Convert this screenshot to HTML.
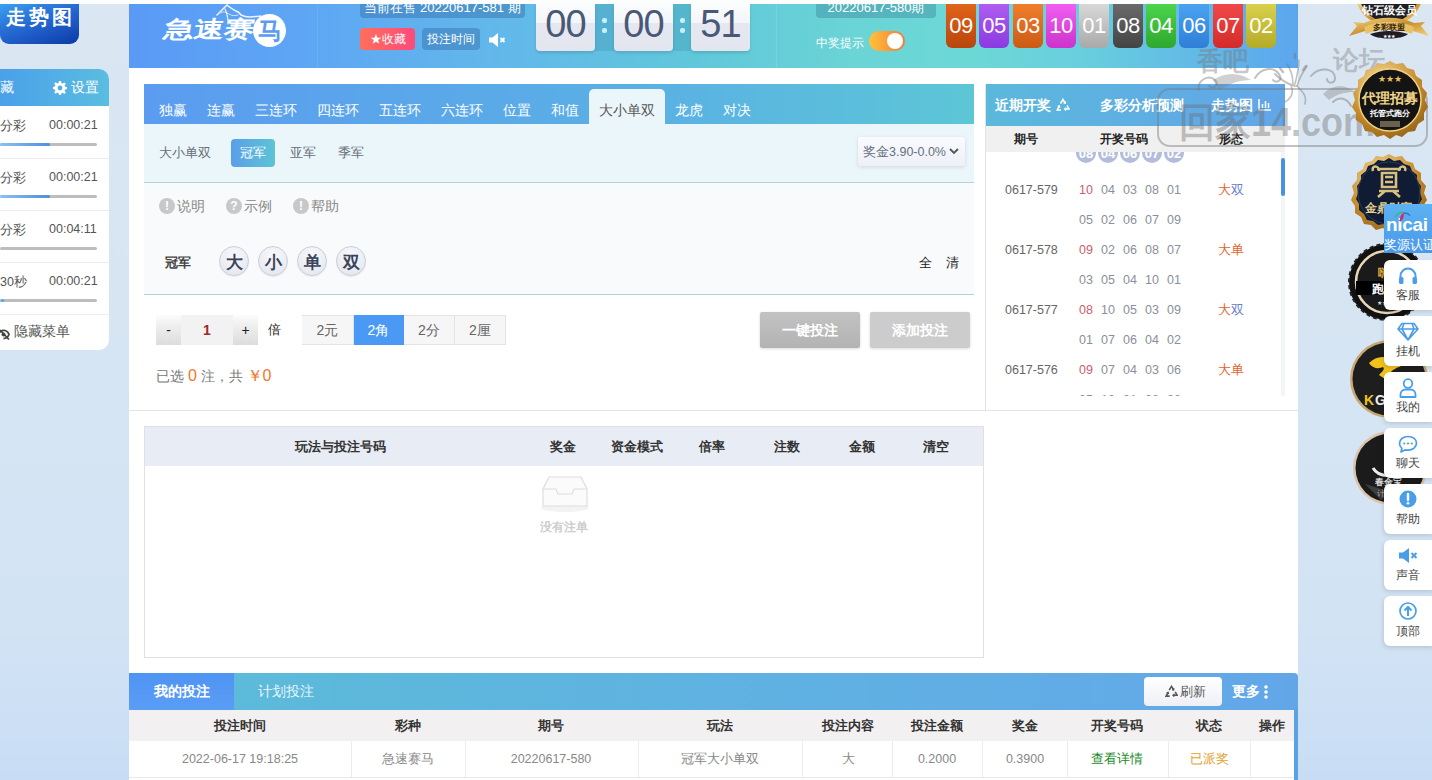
<!DOCTYPE html>
<html><head><meta charset="utf-8">
<style>
*{margin:0;padding:0;box-sizing:border-box;white-space:nowrap}
html,body{width:1432px;height:780px;overflow:hidden}
body{font-family:"Liberation Sans",sans-serif;background:linear-gradient(180deg,#dae6f2 0%,#d6e5f3 50%,#d2e3f4 80%,#c8ddf5 100%);position:relative;color:#333;font-size:13px}
.a{position:absolute}
.c{text-align:center}
/* top strip */
#topstrip{left:0;top:0;width:1432px;height:4px;background:#fcfdfd;z-index:50}
/* left */
#trend{left:0;top:4px;width:79px;height:40px;border-radius:0 0 9px 9px;background:linear-gradient(160deg,#3aa2f2 0%,#2a74d8 35%,#1f5cc8 60%,#0b3aa6 100%);color:#fff;font-size:20px;font-weight:bold;letter-spacing:3px;line-height:26px;padding-left:6px}
#lp{left:0;top:69px;width:109px;height:281px;background:#fff;border-radius:0 10px 10px 0;overflow:hidden}
#lph{left:0;top:0;width:109px;height:37px;background:linear-gradient(90deg,#4aa0ea,#5bbde0);color:#fff;font-size:13px;line-height:37px}
.lrow{left:0;width:109px;height:52px;border-bottom:1px solid #ececec}
.lrow .n{left:0;top:11px;font-size:12.5px;color:#555}
.lrow .t{left:49px;top:11px;font-size:12.5px;color:#555}
.lrow .bar{left:0;top:36px;width:97px;height:3px;background:#bdbdbd;border-radius:2px}
.lrow .bar i{position:absolute;left:0;top:0;height:3px;background:linear-gradient(90deg,#8cc0ee,#4f8fdf);border-radius:2px}
/* header */
#hdr{left:129px;top:4px;width:1169px;height:64px;background:linear-gradient(90deg,#5a9af6 0%,#5ea6f4 15%,#62b8ea 32%,#60c8da 49%,#6ad4d6 62%,#6cd8d6 72%,#68cede 82%,#62b8e6 92%,#5ca6ee 100%)}
.tcard{top:0;width:59px;height:47px;border-radius:0 0 4px 4px;background:linear-gradient(180deg,#fbfcfd 0%,#f3f5f8 40%,#e5e8f0 40.5%,#e3e6ef 100%);box-shadow:0 2px 3px rgba(0,0,0,.12);color:#4a5878;font-size:38px;line-height:40px;text-align:center;letter-spacing:-1px}
.tcol{top:0;height:47px;background:rgba(10,70,100,.13)}.tcol i{position:absolute;left:50%;margin-left:-2.5px;width:5px;height:5px;border-radius:2px;background:#c6f0fb}
.ball{top:0;width:30px;height:44px;border-radius:0 0 6px 6px;color:#fff;font-size:22px;line-height:44px;text-align:center;letter-spacing:-0.5px}
#tabs{left:15px;top:16px;width:830px;height:40px;background:linear-gradient(90deg,#5b9cf0 0%,#5ab0e4 60%,#5cc6d6 100%)}
.tb{top:18px;font-size:14px;color:#fff;line-height:16px}
#sub{left:15px;top:56px;width:830px;height:59px;background:#ebf6fa;border-bottom:1px solid #aed3d8}
#sec{left:15px;top:115px;width:830px;height:112px;background:#f9fafb;border-bottom:1px solid #aed3d8}
.ic{width:16px;height:16px;border-radius:50%;background:#c8c8c8;color:#fff;font-size:12px;font-weight:bold;line-height:16px;text-align:center}
.st{font-size:14px;color:#888;line-height:18px}
.bb{width:30px;height:30px;border-radius:50%;background:radial-gradient(circle at 50% 30%,#f8f9fc,#e0e4ec);border:1px solid #c9ced8;box-shadow:0 1px 1px rgba(0,0,0,.08);font-size:17px;font-weight:bold;color:#3a4358;line-height:31px;text-align:center}
.btn-g{background:linear-gradient(180deg,#fdfdfd 0%,#f2f2f2 25%,#dcdcdc 100%);color:#222;font-size:14px;line-height:30px;text-align:center}
.mode{top:247px;height:30px;border:1px solid #e3e3e3;border-left:none;background:#f6f6f6;color:#666;font-size:14px;line-height:28px;text-align:center}
.mode:first-of-type{border-left:1px solid #e3e3e3}
.mode.on{background:#4a9af5;color:#fff;border-color:#4a9af5}
.bigbtn{top:244px;width:100px;height:36px;border-radius:2px;box-shadow:0 1px 3px rgba(0,0,0,.15);color:#fff;font-size:14px;font-weight:bold;line-height:36px;text-align:center}
#rec{left:856px;top:16px;width:299px;height:326px;border-left:1px solid #e2e2e2}
#bl{left:15px;top:358px;width:840px;height:232px;border:1px solid #e0e0e0;background:#fff}
.hc{transform:translateX(-50%)}
#bt{left:0;top:605px;width:1169px;height:37px;background:linear-gradient(90deg,#5bbcd8,#62aae8 90%,#62a6e8);border-radius:0 4px 0 0}
.rp{font-size:12.5px;color:#666;line-height:18px}
.rn{font-size:12.5px;color:#8a8f9a;line-height:18px}
.vl{top:0;width:1px;height:36px;background:#ececec}
.sb{left:1384px;width:50px;height:50px;background:#fff;border-radius:6px 0 0 6px;box-shadow:-1px 2px 4px rgba(0,0,0,.12)}
.sbt{left:12px;top:28px;font-size:12px;color:#444;line-height:14px}
/* main */
#main{left:129px;top:68px;width:1169px;height:712px;background:#fff}
</style></head>
<body>
<div id="trend" class="a">走势图</div>
<div id="lp" class="a">
  <div id="lph" class="a"><span class="a" style="left:0;top:0;font-size:14px">藏</span><svg class="a" style="left:53px;top:12px" width="14" height="14" viewBox="0 0 14 14"><path d="M6 0h2l.4 2 1.3.6 1.7-1.2 1.4 1.4-1.2 1.7.6 1.3 1.8.3v2l-1.8.4-.6 1.3 1.2 1.7-1.4 1.4-1.7-1.2-1.3.6L8 14H6l-.4-1.8-1.3-.6-1.7 1.2-1.4-1.4 1.2-1.7-.6-1.3L0 8V6l1.8-.4.6-1.3-1.2-1.7 1.4-1.4 1.7 1.2 1.3-.6z" fill="#fff"/><circle cx="7" cy="7" r="2.4" fill="#55aee6"/></svg><span class="a" style="left:71px;top:0;font-size:14px">设置</span></div>
  <div class="lrow a" style="top:38px"><span class="n a">分彩</span><span class="t a">00:00:21</span><div class="bar a"><i style="width:50px"></i></div></div>
  <div class="lrow a" style="top:90px"><span class="n a">分彩</span><span class="t a">00:00:21</span><div class="bar a"><i style="width:50px"></i></div></div>
  <div class="lrow a" style="top:142px"><span class="n a">分彩</span><span class="t a">00:04:11</span><div class="bar a"><i style="width:0px"></i></div></div>
  <div class="lrow a" style="top:194px"><span class="n a">30秒</span><span class="t a">00:00:21</span><div class="bar a"><i style="width:4px"></i></div></div>
  <svg class="a" style="left:-2px;top:260px" width="12" height="11" viewBox="0 0 12 11"><path d="M0 5.5 C2 2 5 1 7 1.5 C9 2 10.5 3.5 11 5.5 C10 8 8 9.5 5.5 9.5" stroke="#444" stroke-width="1.8" fill="none"/><circle cx="5.5" cy="5.5" r="2" fill="#444"/><path d="M2 1 L11 10.5" stroke="#444" stroke-width="1.6"/></svg><div class="a" style="left:14px;top:245px;height:36px;line-height:35px;color:#555;font-size:14px">隐藏菜单</div>
</div>
<div id="hdr" class="a">
  <!-- logo -->
  <div class="a" style="left:38px;top:11px;font-size:23px;font-weight:900;color:#fff;letter-spacing:0px;transform:skewX(-10deg) scaleX(1.3);transform-origin:0 0;line-height:28px">急速赛</div>
  <div class="a" style="left:124px;top:10px;width:33px;height:33px;border-radius:50%;background:#fff;color:#5b9cf0;font-size:24px;font-weight:900;line-height:33px;text-align:center">马</div>
  <svg class="a" style="left:76px;top:0" width="90" height="24" viewBox="0 0 90 24" fill="none" stroke="#fff" stroke-linecap="round"><path d="M12 11 C15 8 19 4 22 1 C25 4 29 6 33 8 C35 9 35 10 36 11 C42 14 48 13 56 12" stroke-width="1.5" opacity=".9"/><path d="M20 5 C22 9 23 13 23 20" stroke-width="1.2" opacity=".85"/><path d="M16 9 C18 7 21 8 24 10 C27 12 30 12 33 11" stroke-width="1" opacity=".7"/></svg>
  <div class="a" style="left:188px;top:0;width:1px;height:64px;background:rgba(255,255,255,.07)"></div>
  <div class="a" style="left:231px;top:-4px;width:165px;height:18px;border-radius:0 0 4px 4px;background:rgba(50,110,170,.45);color:#fff;font-size:13px;line-height:15px;text-align:center">当前在售 20220617-581 期</div>
  <div class="a" style="left:231px;top:24px;width:55px;height:22px;border-radius:4px;background:linear-gradient(90deg,#ff6f5b,#ff4a7c);color:#fff;font-size:12px;line-height:22px;text-align:center">★收藏</div>
  <div class="a" style="left:293px;top:24px;width:58px;height:22px;border-radius:4px;background:rgba(50,110,170,.45);color:#fff;font-size:12px;line-height:22px;text-align:center">投注时间</div>
  <svg class="a" style="left:359px;top:29px" width="20" height="14" viewBox="0 0 20 14"><path d="M1 4.5h3.5L10 0v14L4.5 9.5H1z" fill="#fff"/><path d="M12.5 5l4 4M16.5 5l-4 4" stroke="#fff" stroke-width="1.8"/></svg>
  <!-- timer -->
  <div class="tcard a" style="left:407px">00</div>
  <div class="tcol a" style="left:466px;width:19px"><i style="top:14px"></i><i style="top:24px"></i></div>
  <div class="tcard a" style="left:485px">00</div>
  <div class="tcol a" style="left:544px;width:18px"><i style="top:14px"></i><i style="top:24px"></i></div>
  <div class="tcard a" style="left:562px">51</div>
  <div class="a" style="left:647px;top:0;width:1px;height:64px;background:rgba(255,255,255,.12)"></div>
  <div class="a" style="left:687px;top:-4px;width:120px;height:18px;border-radius:0 0 4px 4px;background:rgba(60,140,160,.45);color:#fff;font-size:13px;line-height:15px;text-align:center">20220617-580期</div>
  <div class="a" style="left:687px;top:32px;color:#fff;font-size:12px;line-height:14px">中奖提示</div>
  <div class="a" style="left:740px;top:27px;width:36px;height:20px;border-radius:10px;background:linear-gradient(90deg,#ffc23a,#f47a3a)"><i style="position:absolute;right:2px;top:2px;width:16px;height:16px;border-radius:50%;background:#fff"></i></div>
  <!-- balls -->
  <div class="ball a" style="left:817px;background:linear-gradient(180deg,#e0641a,#b8460c)">09</div>
  <div class="ball a" style="left:850px;background:linear-gradient(180deg,#b05cf0,#8a3ae0)">05</div>
  <div class="ball a" style="left:884px;background:linear-gradient(180deg,#ef7e2c,#cc5a14)">03</div>
  <div class="ball a" style="left:917px;background:linear-gradient(180deg,#f05ef0,#cc33cc)">10</div>
  <div class="ball a" style="left:950px;background:linear-gradient(180deg,#d8d8d8,#a9a9a9)">01</div>
  <div class="ball a" style="left:984px;background:linear-gradient(180deg,#6a6a6a,#444)">08</div>
  <div class="ball a" style="left:1017px;background:linear-gradient(180deg,#4cd44c,#2ea82e)">04</div>
  <div class="ball a" style="left:1050px;background:linear-gradient(180deg,#4aa2f0,#2f7ed8)">06</div>
  <div class="ball a" style="left:1084px;background:linear-gradient(180deg,#f04848,#d42a2a)">07</div>
  <div class="ball a" style="left:1117px;background:linear-gradient(180deg,#d8d04a,#b5ab2a)">02</div>
</div>
<div id="main" class="a">
  <!-- play panel -->
  <div id="tabs" class="a">
    <span class="a tb" style="left:15px">独赢</span>
    <span class="a tb" style="left:63px">连赢</span>
    <span class="a tb" style="left:111px">三连环</span>
    <span class="a tb" style="left:173px">四连环</span>
    <span class="a tb" style="left:235px">五连环</span>
    <span class="a tb" style="left:297px">六连环</span>
    <span class="a tb" style="left:359px">位置</span>
    <span class="a tb" style="left:407px">和值</span>
    <div class="a" style="left:445px;top:5px;width:76px;height:35px;border-radius:5px 5px 0 0;background:#ebf6fa"></div>
    <span class="a tb" style="left:455px;color:#555">大小单双</span>
    <span class="a tb" style="left:531px">龙虎</span>
    <span class="a tb" style="left:579px">对决</span>
  </div>
  <div id="sub" class="a">
    <span class="a" style="left:15px;top:21px;font-size:13px;color:#686e78;line-height:16px">大小单双</span>
    <div class="a" style="left:87px;top:15px;width:44px;height:28px;border-radius:4px;background:linear-gradient(90deg,#5a9fe8,#5cc4d6);color:#fff;font-size:13px;line-height:28px;text-align:center">冠军</div>
    <span class="a" style="left:146px;top:21px;font-size:13px;color:#686e78;line-height:16px">亚军</span>
    <span class="a" style="left:194px;top:21px;font-size:13px;color:#686e78;line-height:16px">季军</span>
    <div class="a" style="left:714px;top:13px;width:107px;height:29px;border-radius:3px;background:linear-gradient(180deg,#fafbff,#eef0f8);box-shadow:0 1px 4px rgba(0,0,0,.12);font-size:12.5px;color:#66707c;line-height:31px;padding-left:5px">奖金3.90-0.0%<svg style="position:absolute;right:6px;top:11px" width="10" height="7" viewBox="0 0 10 7"><path d="M1 1l4 4 4-4" stroke="#555" stroke-width="1.8" fill="none"/></svg></div>
  </div>
  <div id="sec" class="a">
    <span class="a ic" style="left:15px;top:15px">!</span><span class="a st" style="left:33px;top:14px">说明</span>
    <span class="a ic" style="left:82px;top:15px">?</span><span class="a st" style="left:100px;top:14px">示例</span>
    <span class="a ic" style="left:149px;top:15px">!</span><span class="a st" style="left:167px;top:14px">帮助</span>
    <span class="a" style="left:21px;top:72px;font-size:13px;font-weight:bold;color:#444;line-height:16px">冠军</span>
    <div class="a bb" style="left:75px;top:63px">大</div>
    <div class="a bb" style="left:114px;top:63px">小</div>
    <div class="a bb" style="left:153px;top:63px">单</div>
    <div class="a bb" style="left:192px;top:63px">双</div>
    <span class="a" style="left:775px;top:72px;font-size:13px;color:#222;line-height:16px">全</span>
    <span class="a" style="left:802px;top:72px;font-size:13px;color:#222;line-height:16px">清</span>
  </div>
  <!-- amount -->
  <div class="a btn-g" style="left:27px;top:247px;width:25px;height:30px">-</div>
  <div class="a" style="left:52px;top:247px;width:52px;height:30px;background:#f2f2f2;color:#a02828;font-size:14px;font-weight:bold;line-height:30px;text-align:center">1</div>
  <div class="a btn-g" style="left:104px;top:247px;width:25px;height:30px">+</div>
  <span class="a" style="left:139px;top:254px;font-size:13px;color:#222;line-height:16px">倍</span>
  <div class="a mode" style="left:173px;width:52px">2元</div>
  <div class="a mode on" style="left:225px;width:50px">2角</div>
  <div class="a mode" style="left:275px;width:51px">2分</div>
  <div class="a mode" style="left:326px;width:51px">2厘</div>
  <div class="a" style="left:27px;top:299px;font-size:14px;color:#777;line-height:18px">已选 <span style="color:#f0772a;font-size:16px">0</span> 注，共 <span style="color:#f0772a;font-size:16px">￥0</span></div>
  <div class="a bigbtn" style="left:631px;background:linear-gradient(180deg,#c2c2c2,#b3b3b3)">一键投注</div>
  <div class="a bigbtn" style="left:741px;background:#cccccc">添加投注</div>
  <div class="a" style="left:0;top:342px;width:1169px;height:1px;background:#e4e4e4"></div>
  <!-- recent -->
  <div id="rec" class="a">
    <div class="a" style="left:0;top:0;width:299px;height:42px;background:linear-gradient(90deg,#5bb8dc,#62a6e8);color:#fff;font-size:14px;font-weight:bold;line-height:42px">
      <span class="a" style="left:9px">近期开奖</span>
      <svg class="a" style="left:70px;top:14px" width="14" height="14" viewBox="0 0 14 14" fill="none" stroke="#fff" stroke-width="1.5"><path d="M4.5 5.5 L7 1.5 L9 4.8"/><path d="M9.5 3.5 L9.2 5.2 L7.6 5"/><path d="M11 7.5 L13 11 H9"/><path d="M10.2 12.4 L8.8 11 L10.2 9.7"/><path d="M5 12 H1.2 L3.2 8.2"/><path d="M1.8 8.5 L3.3 8 L3.8 9.6"/></svg>
      <span class="a" style="left:114px">多彩分析预测</span>
      <span class="a" style="left:225px">走势图</span>
      <svg class="a" style="left:272px;top:14px" width="14" height="13" viewBox="0 0 14 13" fill="none" stroke="#fff" stroke-width="1.5"><path d="M1 1 V12 H13"/><path d="M4.5 10 V6 M7.5 10 V3 M10.5 10 V5"/></svg>
    </div>
    <div class="a" style="left:0;top:42px;width:299px;height:26px;background:#f0f0f0;font-size:12px;font-weight:bold;color:#222;line-height:26px">
      <span class="a" style="left:28px">期号</span><span class="a" style="left:114px">开奖号码</span><span class="a" style="left:233px">形态</span>
    </div>
<div class="a" style="left:0;top:68px;width:295px;height:244px;overflow:hidden">
<div class="a" style="left:90px;top:-9px"><span class="a" style="left:0px;top:0;width:20px;height:20px;border-radius:50%;background:#b3bddb;color:#fff;font-size:13px;font-weight:bold;line-height:22px;text-align:center">08</span><span class="a" style="left:22px;top:0;width:20px;height:20px;border-radius:50%;background:#b3bddb;color:#fff;font-size:13px;font-weight:bold;line-height:22px;text-align:center">04</span><span class="a" style="left:44px;top:0;width:20px;height:20px;border-radius:50%;background:#b3bddb;color:#fff;font-size:13px;font-weight:bold;line-height:22px;text-align:center">06</span><span class="a" style="left:66px;top:0;width:20px;height:20px;border-radius:50%;background:#b3bddb;color:#fff;font-size:13px;font-weight:bold;line-height:22px;text-align:center">07</span><span class="a" style="left:88px;top:0;width:20px;height:20px;border-radius:50%;background:#b3bddb;color:#fff;font-size:13px;font-weight:bold;line-height:22px;text-align:center">02</span></div>
<span class="a rp" style="left:19px;top:29px">0617-579</span><span class="a rn" style="left:93px;top:29px;color:#c8606e">10</span><span class="a rn" style="left:115px;top:29px;color:#8a8f9a">04</span><span class="a rn" style="left:137px;top:29px;color:#8a8f9a">03</span><span class="a rn" style="left:159px;top:29px;color:#8a8f9a">08</span><span class="a rn" style="left:181px;top:29px;color:#8a8f9a">01</span><span class="a rn" style="left:93px;top:59px">05</span><span class="a rn" style="left:115px;top:59px">02</span><span class="a rn" style="left:137px;top:59px">06</span><span class="a rn" style="left:159px;top:59px">07</span><span class="a rn" style="left:181px;top:59px">09</span><span class="a" style="left:232px;top:29px;font-size:13px;line-height:18px"><span style="color:#e0622a">大</span><span style="color:#6a7ccc">双</span></span>
<span class="a rp" style="left:19px;top:89px">0617-578</span><span class="a rn" style="left:93px;top:89px;color:#c8606e">09</span><span class="a rn" style="left:115px;top:89px;color:#8a8f9a">02</span><span class="a rn" style="left:137px;top:89px;color:#8a8f9a">06</span><span class="a rn" style="left:159px;top:89px;color:#8a8f9a">08</span><span class="a rn" style="left:181px;top:89px;color:#8a8f9a">07</span><span class="a rn" style="left:93px;top:119px">03</span><span class="a rn" style="left:115px;top:119px">05</span><span class="a rn" style="left:137px;top:119px">04</span><span class="a rn" style="left:159px;top:119px">10</span><span class="a rn" style="left:181px;top:119px">01</span><span class="a" style="left:232px;top:89px;font-size:13px;line-height:18px"><span style="color:#e0622a">大</span><span style="color:#e0622a">单</span></span>
<span class="a rp" style="left:19px;top:149px">0617-577</span><span class="a rn" style="left:93px;top:149px;color:#c8606e">08</span><span class="a rn" style="left:115px;top:149px;color:#8a8f9a">10</span><span class="a rn" style="left:137px;top:149px;color:#8a8f9a">05</span><span class="a rn" style="left:159px;top:149px;color:#8a8f9a">03</span><span class="a rn" style="left:181px;top:149px;color:#8a8f9a">09</span><span class="a rn" style="left:93px;top:179px">01</span><span class="a rn" style="left:115px;top:179px">07</span><span class="a rn" style="left:137px;top:179px">06</span><span class="a rn" style="left:159px;top:179px">04</span><span class="a rn" style="left:181px;top:179px">02</span><span class="a" style="left:232px;top:149px;font-size:13px;line-height:18px"><span style="color:#e0622a">大</span><span style="color:#6a7ccc">双</span></span>
<span class="a rp" style="left:19px;top:209px">0617-576</span><span class="a rn" style="left:93px;top:209px;color:#c8606e">09</span><span class="a rn" style="left:115px;top:209px;color:#8a8f9a">07</span><span class="a rn" style="left:137px;top:209px;color:#8a8f9a">04</span><span class="a rn" style="left:159px;top:209px;color:#8a8f9a">03</span><span class="a rn" style="left:181px;top:209px;color:#8a8f9a">06</span><span class="a rn" style="left:93px;top:239px">05</span><span class="a rn" style="left:115px;top:239px">10</span><span class="a rn" style="left:137px;top:239px">01</span><span class="a rn" style="left:159px;top:239px">08</span><span class="a rn" style="left:181px;top:239px">02</span><span class="a" style="left:232px;top:209px;font-size:13px;line-height:18px"><span style="color:#e0622a">大</span><span style="color:#e0622a">单</span></span>
</div>
<div class="a" style="left:295px;top:68px;width:4px;height:244px;background:#f2f5fa"><i style="position:absolute;left:0;top:6px;width:4px;height:38px;border-radius:2px;background:#4a90e2"></i></div>

  </div>
  <!-- bet list -->
  <div id="bl" class="a">
    <div class="a" style="left:0;top:0;width:838px;height:39px;background:#e8ecf5;font-size:13px;font-weight:bold;color:#333;line-height:39px">
      <span class="a hc" style="left:195px">玩法与投注号码</span>
      <span class="a hc" style="left:418px">奖金</span>
      <span class="a hc" style="left:492px">资金模式</span>
      <span class="a hc" style="left:567px">倍率</span>
      <span class="a hc" style="left:642px">注数</span>
      <span class="a hc" style="left:717px">金额</span>
      <span class="a hc" style="left:791px">清空</span>
    </div>
    <svg class="a" style="left:394px;top:46px" width="52" height="40" viewBox="0 0 52 40"><ellipse cx="26" cy="35" rx="24" ry="4" fill="#f3f3f3"/><path d="M10 4h32l6 12v17H4V16z" fill="#fbfbfb" stroke="#dedede" stroke-width="1.2"/><path d="M4 16h13l2 5h14l2-5h13" fill="none" stroke="#dedede" stroke-width="1.2"/></svg>
    <span class="a" style="left:395px;top:93px;font-size:12px;color:#cdcdcd;line-height:14px;font-weight:bold">没有注单</span>
  </div>
  <!-- bottom -->
  <div id="bt" class="a">
    <div class="a" style="left:0;top:0;width:105px;height:37px;background:linear-gradient(180deg,#4f94f3,#5a9df6);color:#fff;font-size:14px;font-weight:bold;line-height:37px;text-align:center">我的投注</div>
    <span class="a" style="left:129px;top:0;color:#eaf6fb;font-size:14px;line-height:37px">计划投注</span>
    <div class="a" style="left:1015px;top:4px;width:78px;height:29px;border-radius:4px;background:linear-gradient(180deg,#fff,#eef0f6);color:#555;font-size:13px;line-height:29px;text-align:center"><svg class="a" style="left:21px;top:8px" width="13" height="13" viewBox="0 0 14 14" fill="none" stroke="#555" stroke-width="1.7"><path d="M4.5 5.5 L7 1.5 L9 4.8"/><path d="M9.5 3.5 L9.2 5.2 L7.6 5"/><path d="M11 7.5 L13 11 H9"/><path d="M10.2 12.4 L8.8 11 L10.2 9.7"/><path d="M5 12 H1.2 L3.2 8.2"/><path d="M1.8 8.5 L3.3 8 L3.8 9.6"/></svg><span class="a" style="left:36px;top:0">刷新</span></div>
    <span class="a" style="left:1103px;top:0;color:#fff;font-size:14px;font-weight:bold;line-height:37px">更多</span><svg class="a" style="left:1135px;top:12px" width="4" height="14" viewBox="0 0 4 14"><circle cx="2" cy="2" r="1.8" fill="#fff"/><circle cx="2" cy="7" r="1.8" fill="#fff"/><circle cx="2" cy="12" r="1.8" fill="#fff"/></svg>
  </div>
  <div class="a" style="left:0;top:642px;width:1165px;height:31px;background:#f2f0f0;font-size:13px;font-weight:bold;color:#333;line-height:31px">
    <span class="a hc" style="left:111px">投注时间</span>
    <span class="a hc" style="left:279px">彩种</span>
    <span class="a hc" style="left:422px">期号</span>
    <span class="a hc" style="left:591px">玩法</span>
    <span class="a hc" style="left:719px">投注内容</span>
    <span class="a hc" style="left:808px">投注金额</span>
    <span class="a hc" style="left:896px">奖金</span>
    <span class="a hc" style="left:988px">开奖号码</span>
    <span class="a hc" style="left:1080px">状态</span>
    <span class="a hc" style="left:1143px">操作</span>
  </div>
  <div class="a" style="left:0;top:673px;width:1165px;height:37px;border-bottom:1px solid #e8e8e8;font-size:12.5px;color:#888;line-height:36px">
    <span class="a hc" style="left:111px">2022-06-17 19:18:25</span>
    <span class="a hc" style="left:279px">急速赛马</span>
    <span class="a hc" style="left:422px">20220617-580</span>
    <span class="a hc" style="left:591px">冠军大小单双</span>
    <span class="a hc" style="left:719px">大</span>
    <span class="a hc" style="left:808px">0.2000</span>
    <span class="a hc" style="left:896px">0.3900</span>
    <span class="a hc" style="left:988px;color:#1a8a2a">查看详情</span>
    <span class="a hc" style="left:1080px;color:#e8a030">已派奖</span>
    <i class="a vl" style="left:222px"></i><i class="a vl" style="left:336px"></i><i class="a vl" style="left:509px"></i><i class="a vl" style="left:673px"></i><i class="a vl" style="left:763px"></i><i class="a vl" style="left:853px"></i><i class="a vl" style="left:938px"></i><i class="a vl" style="left:1039px"></i><i class="a vl" style="left:1121px"></i>
  </div>
  <div class="a" style="left:1165px;top:641px;width:4px;height:71px;background:#5aa2e8"></div>
</div>

<!-- watermark -->
<div class="a" style="left:1157px;top:88px;width:271px;height:59px;border:2px solid rgba(120,120,120,.45);border-radius:13px"></div>
<div class="a" style="left:1179px;top:96px;font-size:40px;font-weight:bold;color:rgba(110,110,110,.42);line-height:52px;letter-spacing:0px;white-space:nowrap;transform:scaleX(.9);transform-origin:0 0">回家14.com</div>
<div class="a" style="left:1197px;top:46px;font-size:26px;font-weight:bold;color:rgba(120,120,120,.42);line-height:30px">香吧</div>
<div class="a" style="left:1333px;top:45px;font-size:26px;font-weight:bold;color:rgba(120,120,120,.4);line-height:30px">论坛</div>
<svg class="a" style="left:1195px;top:50px" width="165" height="60" viewBox="0 0 165 60" fill="none" stroke="rgba(120,120,120,.45)" stroke-width="2" stroke-linecap="round">
<path d="M4 40 C2 30 14 24 20 30 C25 35 18 40 14 36"/>
<path d="M18 30 C30 22 44 22 56 30 C44 30 34 34 24 40z" fill="rgba(120,120,120,.35)" stroke="none"/>
<path d="M60 28 C66 18 78 16 84 24 C88 30 82 34 78 30"/>
<path d="M80 24 C86 30 92 34 100 36"/>
<path d="M92 14 C96 20 98 26 98 34 M104 10 C104 18 102 26 100 34 M112 16 C108 22 104 28 102 36" stroke-width="1.6"/>
<path d="M96 36 C100 44 94 50 90 52 M102 36 C108 42 112 46 110 54" stroke-width="1.6"/>
<path d="M88 22 l-3 -4 M108 20 l3 -4 M100 8 l0 -4" stroke-width="2.5"/>
<path d="M116 26 C124 16 140 18 140 28 C140 34 132 34 132 29"/>
<path d="M128 44 C138 34 150 34 160 42 C150 42 142 44 134 50z" fill="rgba(120,120,120,.35)" stroke="none"/>
<path d="M138 52 C144 46 152 48 156 56"/>
</svg>
<!-- badges -->
<svg class="a" style="left:1348px;top:0" width="84" height="46" viewBox="0 0 84 46">
  <defs><linearGradient id="gd" x1="0" y1="0" x2="1" y2="1"><stop offset="0" stop-color="#f7dc8a"/><stop offset=".5" stop-color="#c98f2c"/><stop offset="1" stop-color="#f5d27a"/></linearGradient></defs>
  <path d="M8 0 A34 34 0 0 0 74 0z" fill="url(#gd)"/>
  <path d="M12 0 A30 30 0 0 0 70 0z" fill="#1d1d22"/>
  <path d="M1 36 L9 26 L5 22 L16 23 C30 16 52 16 66 23 L77 22 L73 26 L81 36 L68 32 C52 26 30 26 14 32z" fill="url(#gd)"/>
  <path d="M16 27 C30 20 52 20 66 27 L64 34 C50 28 32 28 18 34z" fill="#e8c068"/>
  <path d="M22 34 C34 30 48 30 60 34 C54 40 28 40 22 34z" fill="#1d1d22"/>
  <text x="41" y="14" font-size="11" fill="#fff" text-anchor="middle" font-weight="bold">钻石级会员</text>
  <text x="41" y="30" font-size="8" fill="#3a2408" text-anchor="middle" font-weight="bold">多彩联盟</text>
  <text x="41" y="38" font-size="5" fill="#fff" text-anchor="middle">★★★</text>
</svg>
<svg class="a" style="left:1350px;top:60px" width="80" height="80" viewBox="0 0 80 80">
  <defs><radialGradient id="gb" cx=".4" cy=".3" r=".8"><stop offset="0" stop-color="#ffe9a8"/><stop offset=".6" stop-color="#c48a2a"/><stop offset="1" stop-color="#8a5a14"/></radialGradient></defs>
  <path d="M40 1 L46 4 L53 3 L57 8 L64 10 L66 16 L72 20 L72 27 L77 33 L75 40 L78 47 L74 53 L74 60 L68 64 L65 71 L58 72 L52 77 L46 75 L40 79 L34 75 L27 77 L22 72 L15 71 L12 64 L6 60 L6 53 L2 47 L5 40 L3 33 L8 27 L8 20 L14 16 L16 10 L23 8 L27 3 L34 4z" fill="url(#gb)"/>
  <circle cx="40" cy="40" r="31" fill="#141414" stroke="#f0d080" stroke-width="1.5"/>
  <text x="40" y="22" font-size="9" fill="#e8c060" text-anchor="middle">★★★</text>
  <text x="40" y="43" font-size="14" fill="#f0d48a" text-anchor="middle" font-weight="bold">代理招募</text>
  <text x="40" y="56" font-size="8" fill="#fff" text-anchor="middle" font-weight="bold">托管式跑分</text>
  <rect x="30" y="61" width="20" height="6" fill="#6a6050"/>
</svg>
<svg class="a" style="left:1349px;top:153px" width="80" height="80" viewBox="0 0 80 80">
  <path d="M40 1 L46 4 L53 3 L57 8 L64 10 L66 16 L72 20 L72 27 L77 33 L75 40 L78 47 L74 53 L74 60 L68 64 L65 71 L58 72 L52 77 L46 75 L40 79 L34 75 L27 77 L22 72 L15 71 L12 64 L6 60 L6 53 L2 47 L5 40 L3 33 L8 27 L8 20 L14 16 L16 10 L23 8 L27 3 L34 4z" fill="url(#gb)"/>
  <path d="M40 5 L45 8 L51 7 L55 11 L61 13 L63 18 L68 22 L68 28 L72 33 L71 40 L73 46 L70 51 L70 57 L65 61 L62 67 L56 68 L51 72 L45 71 L40 74 L35 71 L29 72 L24 68 L18 67 L15 61 L10 57 L10 51 L7 46 L9 40 L8 33 L12 28 L12 22 L17 18 L19 13 L25 11 L29 7 L35 8z" fill="#0f1c33"/>
  <circle cx="40" cy="40" r="31" fill="none" stroke="#2a3a5a" stroke-width="1"/>
  <path d="M24 18 C22 12 30 12 30 18 M56 18 C58 12 50 12 50 18 M28 16 h24 M33 20 h14 v14 h-14z M36 24 h8 M36 29 h8 M30 38 h20 M29 44 l7 -6 M51 44 l-7 -6" stroke="#d8c080" stroke-width="2.6" fill="none"/>
  <text x="40" y="59" font-size="12" fill="#e8d090" text-anchor="middle" font-weight="bold">金鼎财富</text>
  <text x="40" y="67" font-size="5" fill="#a09070" text-anchor="middle">~ ~ ~</text>
</svg>
<svg class="a" style="left:1348px;top:243px" width="78" height="78" viewBox="0 0 78 78">
  <circle cx="39" cy="39" r="38" fill="#111" stroke="#222" stroke-width="2" stroke-dasharray="4 3"/>
  <circle cx="39" cy="39" r="31" fill="#1a1a1a" stroke="#e6d8b8" stroke-width="2.5"/>
  <text x="36" y="34" font-size="12" fill="#e8b040" text-anchor="middle" font-weight="bold">嗨</text>
  <rect x="8" y="38" width="62" height="14" fill="#000"/>
  <text x="36" y="50" font-size="12" fill="#fff" text-anchor="middle" font-weight="bold">跑分</text>
  <text x="36" y="62" font-size="6" fill="#ddd" text-anchor="middle">★★★</text>
</svg>
<svg class="a" style="left:1349px;top:339px" width="80" height="80" viewBox="0 0 80 80">
  <circle cx="40" cy="40" r="39" fill="#c8a870"/><circle cx="40" cy="40" r="36.5" fill="#1e1e1e"/>
  <path d="M20 24 C26 18 34 16 42 20 L52 18 L58 24 L50 28 C44 30 40 34 36 40 L30 36 C34 32 36 30 34 28 C30 30 24 30 20 24z" fill="#f2c21a"/>
  <text x="15" y="66" font-size="14" fill="#f2c21a" font-weight="bold">K</text><text x="26" y="66" font-size="14" fill="#eee" font-weight="bold">G</text>
</svg>
<svg class="a" style="left:1351px;top:430px" width="78" height="76" viewBox="0 0 78 76">
  <circle cx="39" cy="38" r="37" fill="#dcc4ac"/><circle cx="39" cy="38" r="34.5" fill="#1b1b1b"/>
  <path d="M22 38 C28 48 44 48 52 38" stroke="#eee" stroke-width="3" fill="none"/><path d="M36 22 v14" stroke="#eee" stroke-width="3"/>
  <path d="M14 54 L30 70 L40 62z" fill="#555" opacity=".6"/>
  <text x="37" y="55" font-size="9" fill="#ddd" text-anchor="middle" font-weight="bold">春金宝</text>
  <text x="30" y="66" font-size="8" fill="#aaa" text-anchor="middle">计</text>
</svg>
<!-- nicai -->
<div class="a" style="left:1384px;top:204px;width:48px;height:49px;background:linear-gradient(180deg,#5cb2f2,#4a98e8);border-radius:3px 0 0 0;color:#fff;overflow:hidden">
  <div class="a" style="left:2px;top:10px;font-size:19px;font-weight:bold;line-height:22px;letter-spacing:-0.3px">nicai</div>
  <div class="a" style="left:0px;top:33px;font-size:13px;line-height:15px;white-space:nowrap">奖源认证</div>
  <svg class="a" style="left:9px;top:7px" width="18" height="12" viewBox="0 0 18 12"><path d="M2 6 C5 2 9 1 12 2" stroke="#3cba6a" stroke-width="1.5" fill="none"/><path d="M7 11 C6 7 8 3 11 2 C11 6 10 9 7 11z" fill="#d0287a"/><path d="M11 2 C14 2 16 3 17 5" stroke="#2a7ad0" stroke-width="1.4" fill="none"/></svg>
</div>
<!-- side buttons -->
<div class="sb a" style="top:260px"><svg class="a" style="left:14px;top:7px" width="20" height="18" viewBox="0 0 20 18"><path d="M2.5 11 V9 a7.5 7.5 0 0 1 15 0 V11" stroke="#4a9ee8" stroke-width="2" fill="none"/><rect x="1" y="10" width="4.5" height="7" rx="1.5" fill="#4a9ee8"/><rect x="14.5" y="10" width="4.5" height="7" rx="1.5" fill="#4a9ee8"/></svg><span class="sbt a">客服</span></div>
<div class="sb a" style="top:316px"><svg class="a" style="left:13px;top:6px" width="22" height="19" viewBox="0 0 22 19"><path d="M5 1.5h12l4 5.5-10 11L1 7z M1 7h20 M7 1.5l-2 5.5 6 11 6-11-2-5.5" stroke="#4a9ee8" stroke-width="1.6" fill="none" stroke-linejoin="round"/></svg><span class="sbt a">挂机</span></div>
<div class="sb a" style="top:372px"><svg class="a" style="left:15px;top:6px" width="18" height="20" viewBox="0 0 18 20"><circle cx="9" cy="5.5" r="4.3" stroke="#4a9ee8" stroke-width="1.8" fill="none"/><path d="M1.5 19 v-2.5 a5 5 0 0 1 5 -5 h5 a5 5 0 0 1 5 5 V19z" stroke="#4a9ee8" stroke-width="1.8" fill="none" stroke-linejoin="round"/></svg><span class="sbt a">我的</span></div>
<div class="sb a" style="top:428px"><svg class="a" style="left:14px;top:7px" width="20" height="18" viewBox="0 0 20 18"><path d="M10 1.5 C5 1.5 1.5 4.5 1.5 8.5 c0 2 1 3.6 2.4 4.8 L3 17 l4.3-2.2 c0.9 0.2 1.8 0.3 2.7 0.3 c5 0 8.5-3 8.5-7 S15 1.5 10 1.5z" stroke="#4a9ee8" stroke-width="1.7" fill="none" stroke-linejoin="round"/><circle cx="6.3" cy="8.5" r="1.1" fill="#4a9ee8"/><circle cx="10" cy="8.5" r="1.1" fill="#4a9ee8"/><circle cx="13.7" cy="8.5" r="1.1" fill="#4a9ee8"/></svg><span class="sbt a">聊天</span></div>
<div class="sb a" style="top:484px"><svg class="a" style="left:15px;top:6px" width="18" height="18" viewBox="0 0 18 18"><circle cx="9" cy="9" r="8.5" fill="#4a9ee8"/><path d="M9 4v6" stroke="#fff" stroke-width="2.4" stroke-linecap="round"/><circle cx="9" cy="13.3" r="1.3" fill="#fff"/></svg><span class="sbt a">帮助</span></div>
<div class="sb a" style="top:540px"><svg class="a" style="left:14px;top:8px" width="21" height="15" viewBox="0 0 21 15"><path d="M1 4.5h4L11 0v15L5 10.5H1z" fill="#4a9ee8"/><path d="M13.5 5l5 5M18.5 5l-5 5" stroke="#4a9ee8" stroke-width="2"/></svg><span class="sbt a">声音</span></div>
<div class="sb a" style="top:596px"><svg class="a" style="left:15px;top:6px" width="18" height="18" viewBox="0 0 18 18"><circle cx="9" cy="9" r="8" stroke="#4a9ee8" stroke-width="1.7" fill="none"/><path d="M9 14V6 M5.5 8.5 L9 5 12.5 8.5" stroke="#4a9ee8" stroke-width="2" fill="none"/></svg><span class="sbt a">顶部</span></div>
<div id="topstrip" class="a"></div>
</body></html>
